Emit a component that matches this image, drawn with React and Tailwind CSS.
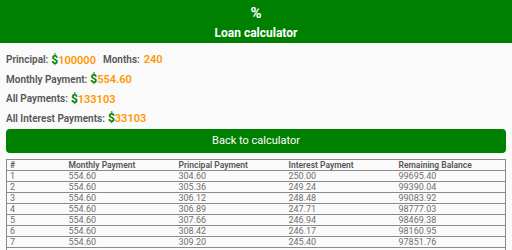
import React from "react";

const rows = [
  ["1", "554.60", "304.60", "250.00", "99695.40"],
  ["2", "554.60", "305.36", "249.24", "99390.04"],
  ["3", "554.60", "306.12", "248.48", "99083.92"],
  ["4", "554.60", "306.89", "247.71", "98777.03"],
  ["5", "554.60", "307.66", "246.94", "98469.38"],
  ["6", "554.60", "308.42", "246.17", "98160.95"],
  ["7", "554.60", "309.20", "245.40", "97851.76"],
];

function Money({ value }) {
  return (
    <span className="ml-[3px]">
      <span className="text-[12px] font-bold text-[#008000]">$</span>
      <span className="text-[11px] font-semibold text-[#ff9800]">{value}</span>
    </span>
  );
}

function Line({ children }) {
  return (
    <div className="flex h-[19.5px] items-center text-[10px] font-semibold text-[#555555]">
      {children}
    </div>
  );
}

export default function App() {
  return (
    <div
      className="h-[250px] w-[512px] overflow-hidden bg-[#fafafa]"
      style={{ fontFamily: "Roboto, 'Liberation Sans', sans-serif" }}
    >
      {/* Header */}
      <header className="flex h-[43px] flex-col items-center bg-[#008000] text-white">
        <div className="mt-[5px] text-[15px] font-bold leading-[17px]">%</div>
        <div className="mt-[3px] text-[12px] font-bold leading-[16px]">Loan calculator</div>
      </header>

      {/* Summary */}
      <div className="px-[6px] pt-[7px]">
        <Line>
          Principal:
          <Money value="100000" />
          <span className="ml-[7px]">Months:</span>
          <span className="ml-[4px] text-[11px] font-semibold text-[#ff9800]">240</span>
        </Line>
        <Line>
          Monthly Payment:
          <Money value="554.60" />
        </Line>
        <Line>
          All Payments:
          <Money value="133103" />
        </Line>
        <Line>
          All Interest Payments:
          <Money value="33103" />
        </Line>

        <button className="mt-px flex h-[24px] w-full items-center justify-center rounded-[4px] bg-[#008000] text-[11px] font-normal text-white">
          Back to calculator
        </button>

        {/* Schedule */}
        <table className="mt-[6px] w-full table-fixed border-collapse border border-[#8a8a8a] leading-[10px]">
          <colgroup>
            <col className="w-[59px]" />
            <col className="w-[110px]" />
            <col className="w-[110px]" />
            <col className="w-[110px]" />
            <col />
          </colgroup>
          <thead>
            <tr className="h-[11px] border-b border-[#8a8a8a] text-left text-[8.5px] text-[#555555]">
              <th className="px-[3px] font-semibold">#</th>
              <th className="px-[3px] font-semibold">Monthly Payment</th>
              <th className="px-[3px] font-semibold">Principal Payment</th>
              <th className="px-[3px] font-semibold">Interest Payment</th>
              <th className="px-[3px] font-semibold">Remaining Balance</th>
            </tr>
          </thead>
          <tbody className="text-[9px] text-[#707070]">
            {rows.map((r) => (
              <tr key={r[0]} className="h-[11px] border-b border-[#8a8a8a]">
                {r.map((c, i) => (
                  <td key={i} className="px-[3px]">
                    {c}
                  </td>
                ))}
              </tr>
            ))}
            <tr className="h-[11px]">
              <td colSpan={5}></td>
            </tr>
          </tbody>
        </table>
      </div>
    </div>
  );
}
